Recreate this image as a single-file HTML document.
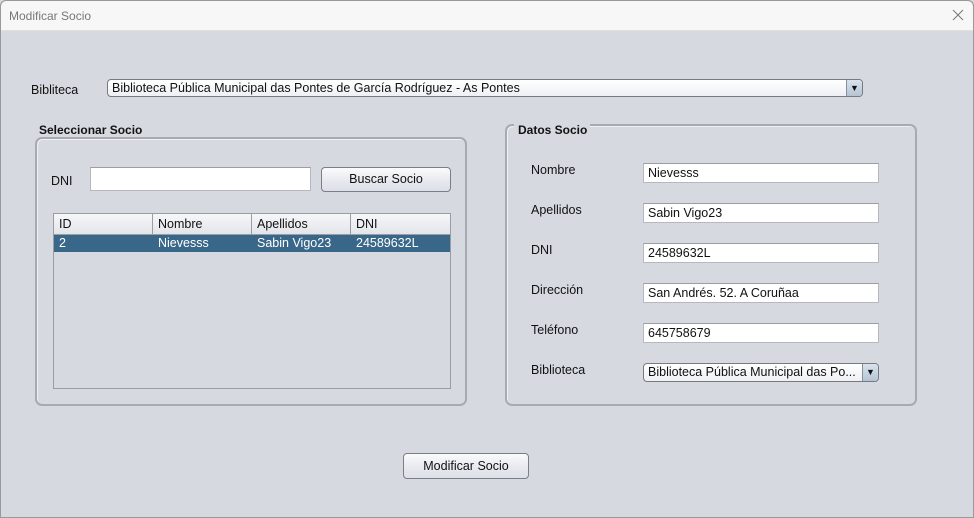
<!DOCTYPE html>
<html><head><meta charset="utf-8"><style>
*{box-sizing:border-box;margin:0;padding:0}
body{width:974px;height:518px;background:#d6d9e0;font-family:"Liberation Sans",sans-serif;font-size:12px;color:#111;position:relative;overflow:hidden}
.a{position:absolute}
.title{left:0;top:0;width:974px;height:31px;background:#f7f7f7;border:1px solid #bbb;border-bottom:1px solid #e0e0e0;border-radius:6px 6px 0 0}
.frame{left:0;top:0;width:974px;height:518px;border:1px solid #999;border-radius:6px 6px 0 0;pointer-events:none}
.tf{background:#fff;border:1px solid #b5b8bd;border-top-color:#9a9da2;height:20px;padding:2px 4px;font-size:12.5px;line-height:15px}
.btn{border:1px solid #7b7e84;border-radius:4px;background:linear-gradient(#fbfbfc,#e6e8ee 60%,#dde0e8);text-align:center;font-size:12.5px}
.combo{border:1px solid #777a80;border-radius:4px;background:linear-gradient(#fff,#eef0f4);font-size:12.5px;padding-left:4px;line-height:16px}
.arr{position:absolute;right:0;top:0;bottom:0;width:16px;border-left:1px solid #8a9099;background:linear-gradient(#d9e3ee,#b4c3d4);border-radius:0 3px 3px 0;font-size:9px;text-align:center;line-height:16px}
.grp{border:2px solid #a7aab0;border-radius:7px;box-shadow:inset 1px 1px 0 #eef0f3}
.lbl{font-size:12.5px}
.th{top:0;height:21px;border-right:1px solid #9a9da3;padding-left:5px;line-height:20px;font-size:12.5px}
</style></head><body>
<div class="a title"></div>
<div class="a" style="left:9px;top:9px;font-size:12px;color:#777">Modificar Socio</div>
<svg class="a" style="left:952px;top:9px" width="12" height="12"><path d="M1 1L11 11M11 1L1 11" stroke="#777" stroke-width="1"/></svg>

<div class="a lbl" style="left:31px;top:83px">Bibliteca</div>
<div class="a combo" style="left:107px;top:79px;width:756px;height:18px">Biblioteca Pública Municipal das Pontes de García Rodríguez - As Pontes<div class="arr">▼</div></div>

<div class="a" style="left:39px;top:123px;font-weight:bold;font-size:12px">Seleccionar Socio</div>
<div class="a grp" style="left:35px;top:137px;width:432px;height:269px"></div>
<div class="a lbl" style="left:51px;top:174px">DNI</div>
<div class="a tf" style="left:90px;top:167px;width:221px;height:24px"></div>
<div class="a btn" style="left:321px;top:167px;width:130px;height:25px;line-height:23px">Buscar Socio</div>

<div class="a" style="left:53px;top:213px;width:398px;height:176px;border:1px solid #9a9da3;background:#d6d9e0">
 <div class="a" style="left:0;top:0;width:396px;height:21px;background:linear-gradient(#f6f7f9,#e3e5ea);border-bottom:1px solid #9a9da3"></div>
 <div class="a th" style="left:0;width:99px">ID</div>
 <div class="a th" style="left:99px;width:99px">Nombre</div>
 <div class="a th" style="left:198px;width:99px">Apellidos</div>
 <div class="a th" style="left:297px;width:99px;border-right:none">DNI</div>
 <div class="a" style="left:0;top:21px;width:396px;height:17px;background:#396789;color:#fff;font-size:12.5px;line-height:17px">
  <span class="a" style="left:5px">2</span><span class="a" style="left:104px">Nievesss</span><span class="a" style="left:203px">Sabin Vigo23</span><span class="a" style="left:302px">24589632L</span>
 </div>
</div>

<div class="a grp" style="left:505px;top:124px;width:412px;height:282px"></div>
<div class="a" style="left:514px;top:122px;width:76px;height:10px;background:#d6d9e0"></div>
<div class="a" style="left:518px;top:123px;font-weight:bold;font-size:12px">Datos Socio</div>

<div class="a lbl" style="left:531px;top:163px">Nombre</div>
<div class="a tf" style="left:643px;top:163px;width:236px">Nievesss</div>
<div class="a lbl" style="left:531px;top:203px">Apellidos</div>
<div class="a tf" style="left:643px;top:203px;width:236px">Sabin Vigo23</div>
<div class="a lbl" style="left:531px;top:243px">DNI</div>
<div class="a tf" style="left:643px;top:243px;width:236px">24589632L</div>
<div class="a lbl" style="left:531px;top:283px">Dirección</div>
<div class="a tf" style="left:643px;top:283px;width:236px">San Andrés. 52. A Coruñaa</div>
<div class="a lbl" style="left:531px;top:323px">Teléfono</div>
<div class="a tf" style="left:643px;top:323px;width:236px">645758679</div>
<div class="a lbl" style="left:531px;top:363px">Biblioteca</div>
<div class="a combo" style="left:643px;top:363px;width:236px;height:19px;line-height:17px">Biblioteca Pública Municipal das Po...<div class="arr" style="line-height:17px">▼</div></div>

<div class="a btn" style="left:403px;top:453px;width:126px;height:26px;line-height:25px">Modificar Socio</div>
<div class="a frame"></div>
</body></html>
